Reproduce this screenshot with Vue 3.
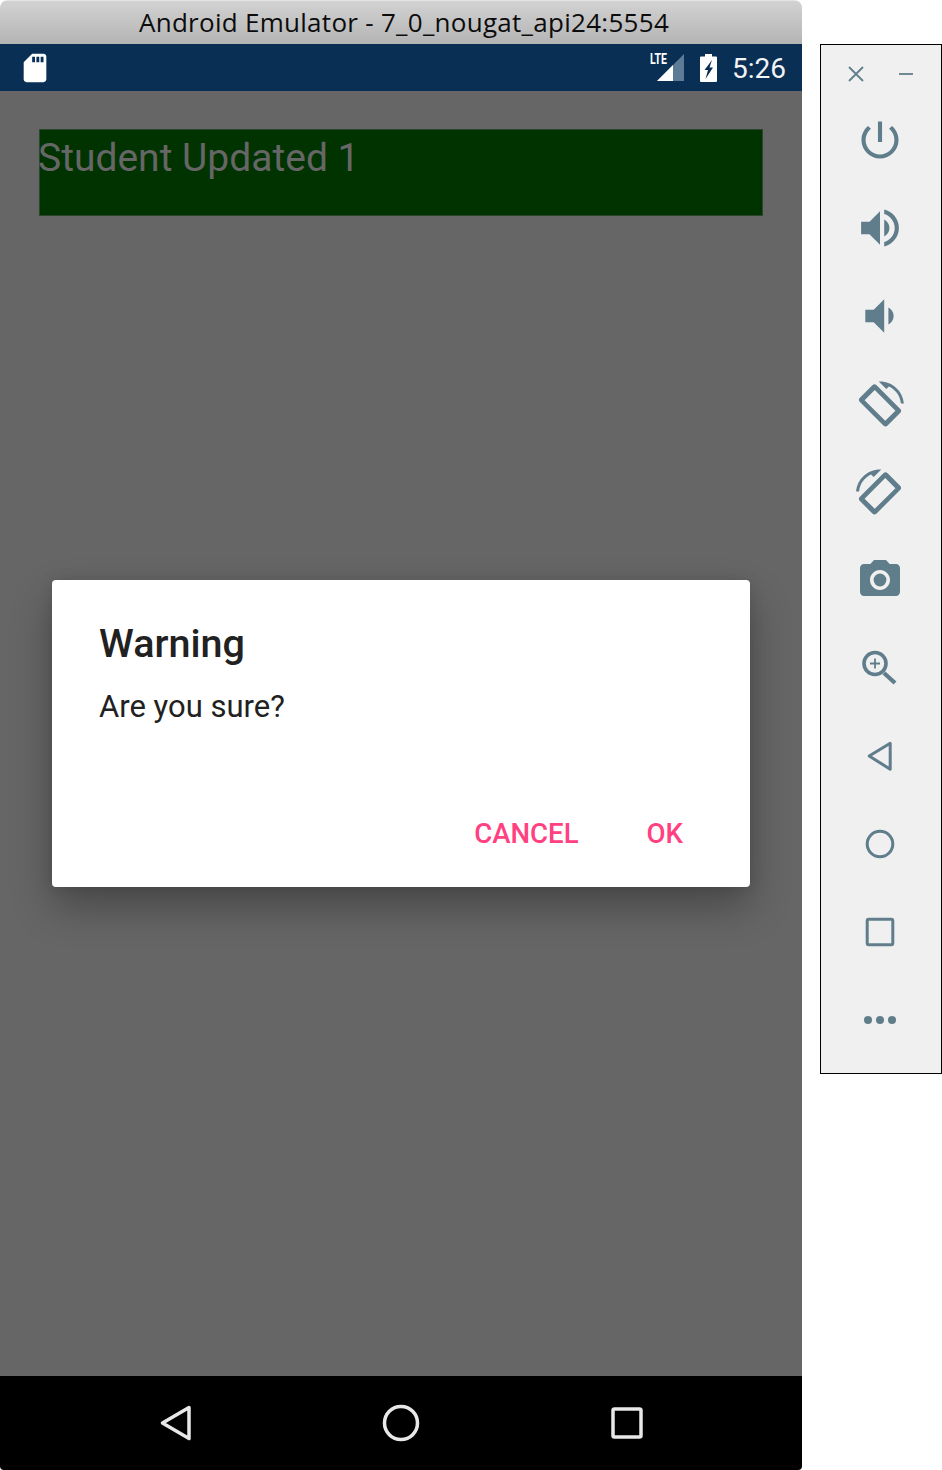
<script setup>
const arc = 'M16.48 2.52c3.27 1.55 5.61 4.72 5.97 8.48h1.5C23.44 4.84 18.29 0 12 0l-.66.03 3.81 3.81 1.33-1.32z'
const phone = 'M3.700 6.100h16.600a1.500 1.500 0 0 1 1.500 1.500v8.800a1.500 1.500 0 0 1-1.500 1.500H3.700a1.500 1.500 0 0 1-1.500-1.500V7.600a1.500 1.500 0 0 1 1.500-1.500zM4.700 8.400v7.200h14.600V8.400z'
</script>

<template>
  <div class="page">
    <div class="window">
      <div class="titlebar">Android Emulator - 7_0_nougat_api24:5554</div>
      <div class="statusbar">
        <svg class="sd" viewBox="0 0 24 24"><path fill="#fff" d="M18 2h-8L4.020 8 4 20c0 1.100.9 2 2 2h12c1.100 0 2-.9 2-2V4c0-1.100-.9-2-2-2zm-6 6h-2V4h2v4zm3 0h-2V4h2v4zm3 0h-2V4h2v4z"/></svg>
        <div class="status-right">
          <div class="signal">
            <span class="lte">LTE</span>
            <svg width="35" height="27" viewBox="0 0 35 27"><path fill="#5d7a96" d="M8 27 35 0v27z"/><path fill="#fff" d="M8 27 24 11v16z"/></svg>
          </div>
          <svg class="battery" width="17" height="28" viewBox="0 0 17 28"><path fill="#fff" fill-rule="evenodd" d="M5 0h7v2.500h4a1 1 0 0 1 1 1V27a1 1 0 0 1-1 1H1a1 1 0 0 1-1-1V3.500a1 1 0 0 1 1-1h4zM12 6 4.500 16h3.500L5.500 25 13 13.500H9.500z"/></svg>
          <span class="clock">5:26</span>
        </div>
      </div>
      <div class="content">
        <div class="toast">Student Updated 1</div>
        <div class="overlay">
          <div class="dialog">
            <div class="dialog-title">Warning</div>
            <div class="dialog-body">Are you sure?</div>
            <div class="dialog-actions">
              <span class="action">CANCEL</span>
              <span class="action">OK</span>
            </div>
          </div>
        </div>
      </div>
      <div class="navbar">
        <svg class="nav-icon" viewBox="0 0 48 48"><path d="M38 8.500 11.500 24 38 39.500z"/></svg>
        <svg class="nav-icon" viewBox="0 0 48 48"><circle cx="24" cy="24" r="16.500"/></svg>
        <svg class="nav-icon" viewBox="0 0 48 48"><rect x="10" y="10" width="28" height="28" rx="1.500"/></svg>
      </div>
    </div>

    <aside class="panel">
      <div class="panel-head">
        <svg width="16" height="16" viewBox="0 0 16 16"><path class="thin" d="M1 1l14 14M15 1 1 15"/></svg>
        <svg width="16" height="16" viewBox="0 0 16 16"><path class="thin" d="M1 8h14"/></svg>
      </div>
      <div class="tools">
        <svg class="tool" viewBox="0 0 24 24"><path d="M13 3h-2v10h2V3zm4.830 2.170-1.420 1.420C17.990 7.860 19 9.810 19 12c0 3.870-3.130 7-7 7s-7-3.130-7-7c0-2.190 1.010-4.140 2.580-5.420L6.170 5.170C4.230 6.820 3 9.260 3 12c0 4.970 4.030 9 9 9s9-4.030 9-9c0-2.740-1.230-5.180-3.170-6.830z" transform="translate(-.36 -.36) scale(1.030)"/></svg>
        <svg class="tool" viewBox="0 0 24 24"><path d="M3 9v6h4l5 5V4L7 9H3zm13.500 3c0-1.770-1.020-3.290-2.500-4.030v8.050c1.480-.730 2.500-2.250 2.500-4.020zM14 3.230v2.060c2.890.860 5 3.540 5 6.710s-2.110 5.850-5 6.710v2.060c4.010-.910 7-4.490 7-8.770s-2.990-7.860-7-8.770z" transform="translate(-.6 -.6) scale(1.050)"/></svg>
        <svg class="tool" viewBox="0 0 24 24"><path d="M18.500 12c0-1.770-1.020-3.290-2.500-4.030v8.050c1.480-.730 2.500-2.250 2.500-4.020zM5 9v6h4l5 5V4L9 9H5z" transform="translate(-.6 -.6) scale(1.050)"/></svg>
        <svg class="tool" viewBox="0 0 24 24"><g transform="translate(0 .7)"><path :d="arc"/><path fill-rule="evenodd" :d="phone" transform="rotate(45 12 12)"/></g></svg>
        <svg class="tool mirror" viewBox="0 0 24 24"><g transform="translate(0 .7)"><path :d="arc"/><path fill-rule="evenodd" :d="phone" transform="rotate(45 12 12)"/></g></svg>
        <svg class="tool" viewBox="0 0 24 24"><circle cx="12" cy="12" r="3.200"/><path d="M9 2 7.170 4H4c-1.100 0-2 .9-2 2v12c0 1.100.9 2 2 2h16c1.100 0 2-.9 2-2V6c0-1.100-.9-2-2-2h-3.170L15 2H9zm3 15c-2.760 0-5-2.240-5-5s2.240-5 5-5 5 2.240 5 5-2.240 5-5 5z"/></svg>
        <svg class="tool line" viewBox="0 0 48 48"><circle class="heavy" cx="19" cy="19.500" r="11"/><path class="handle" d="M28 29l11 10"/><path class="fine" d="M14 19.500h10M19 14.500v10"/></svg>
        <svg class="tool line" viewBox="0 0 48 48"><path d="M34.200 11.200 13.200 24l21 13.200z"/></svg>
        <svg class="tool line" viewBox="0 0 48 48"><circle cx="24" cy="24" r="12.800"/></svg>
        <svg class="tool line" viewBox="0 0 48 48"><rect x="11.200" y="11.200" width="25.600" height="25.600" rx="1.500"/></svg>
        <svg class="tool" viewBox="0 0 48 48"><circle cx="12" cy="24" r="4"/><circle cx="24" cy="24" r="4"/><circle cx="36" cy="24" r="4"/></svg>
      </div>
    </aside>
  </div>
</template>

<style scoped>
.page {
  display: flex;
  align-items: flex-start;
  width: 942px;
  height: 1470px;
  overflow: hidden;
  background: #fff;
}
.window {
  display: flex;
  flex-direction: column;
  flex: none;
  width: 802px;
  height: 1470px;
  overflow: hidden;
  border-radius: 8px 8px 4px 4px;
}
.titlebar {
  flex: none;
  height: 44px;
  box-sizing: border-box;
  padding-left: 6px;
  background: linear-gradient(#d3d2d3, #b4b4b5);
  border-top: 1px solid #e4e4e4;
  color: #0c0c0c;
  font: 26px/42px "Open Sans", sans-serif;
  letter-spacing: 0.28px;
  text-align: center;
  white-space: nowrap;
}
.statusbar {
  flex: none;
  height: 47px;
  background: #0a2f55;
  display: flex;
  align-items: center;
  justify-content: space-between;
  padding: 0 16px 0 18px;
}
.sd { width: 34px; height: 34px; }
.status-right {
  display: flex;
  align-items: center;
}
.signal {
  position: relative;
  width: 35px;
  height: 27px;
  margin-right: 16px;
}
.signal svg { display: block; }
.lte {
  position: absolute;
  left: 1px;
  top: -2px;
  color: #fff;
  font: 700 15px/15px Roboto, sans-serif;
  transform: scaleX(0.7);
  transform-origin: 0 0;
}
.battery { margin-right: 15px; }
.clock {
  position: relative;
  top: 1px;
  color: #f2f4f6;
  font: 400 28px/1 Roboto, sans-serif;
}
.content {
  position: relative;
  flex: 1;
  background: #666;
  padding: 38px 39px 0;
}
.toast {
  box-sizing: border-box;
  height: 87px;
  padding-top: 5px;
  background: #003300;
  border: 1px solid #2b462b;
  color: #666;
  font: 400 39px/47px Roboto, sans-serif;
  text-indent: -2px;
}
.overlay {
  position: absolute;
  inset: 0;
  display: flex;
  align-items: center;
  justify-content: center;
}
.dialog {
  box-sizing: border-box;
  width: 698px;
  height: 307px;
  padding: 40px 47px 0;
  background: #fff;
  border-radius: 4px;
  box-shadow: 0 20px 40px rgba(0, 0, 0, 0.3), 0 0 14px rgba(0, 0, 0, 0.1);
  font-family: Roboto, sans-serif;
  color: #212121;
}
.dialog-title {
  font-weight: 500;
  font-size: 39.500px;
  line-height: 47px;
}
.dialog-body {
  margin-top: 21px;
  font-size: 31px;
  line-height: 38px;
}
.dialog-actions {
  display: flex;
  justify-content: flex-end;
  gap: 68px;
  margin-top: 91px;
  padding-right: 20px;
}
.action {
  color: #ff4081;
  font-weight: 500;
  font-size: 27.600px;
  line-height: 33px;
}
.navbar {
  flex: none;
  height: 94px;
  background: #000;
  display: flex;
  align-items: center;
  justify-content: center;
  gap: 178px;
}
.nav-icon {
  width: 48px;
  height: 48px;
  fill: none;
  stroke: #e8e8e8;
  stroke-width: 3.500;
  stroke-linejoin: round;
}
.panel {
  flex: none;
  box-sizing: border-box;
  width: 122px;
  height: 1030px;
  margin: 44px 0 0 18px;
  background: #f0f0f0;
  border: 1px solid #000;
}
.panel-head {
  display: flex;
  justify-content: space-between;
  height: 71px;
  box-sizing: border-box;
  padding: 21px 27px 0 27px;
}
.thin {
  fill: none;
  stroke: #607d8b;
  stroke-width: 1.800;
}
.tools {
  display: flex;
  flex-direction: column;
  align-items: center;
  gap: 40px;
  padding-right: 2px;
}
.tool {
  flex: none;
  width: 48px;
  height: 48px;
  fill: #607d8b;
}
.mirror { transform: scaleX(-1); }
.line {
  fill: none;
  stroke: #607d8b;
  stroke-width: 3;
  stroke-linejoin: round;
  stroke-linecap: round;
}
.line .heavy { stroke-width: 3.600; }
.line .handle { stroke-width: 4.200; stroke-linecap: butt; }
.line .fine { stroke-width: 1.800; stroke-linecap: butt; }
</style>
